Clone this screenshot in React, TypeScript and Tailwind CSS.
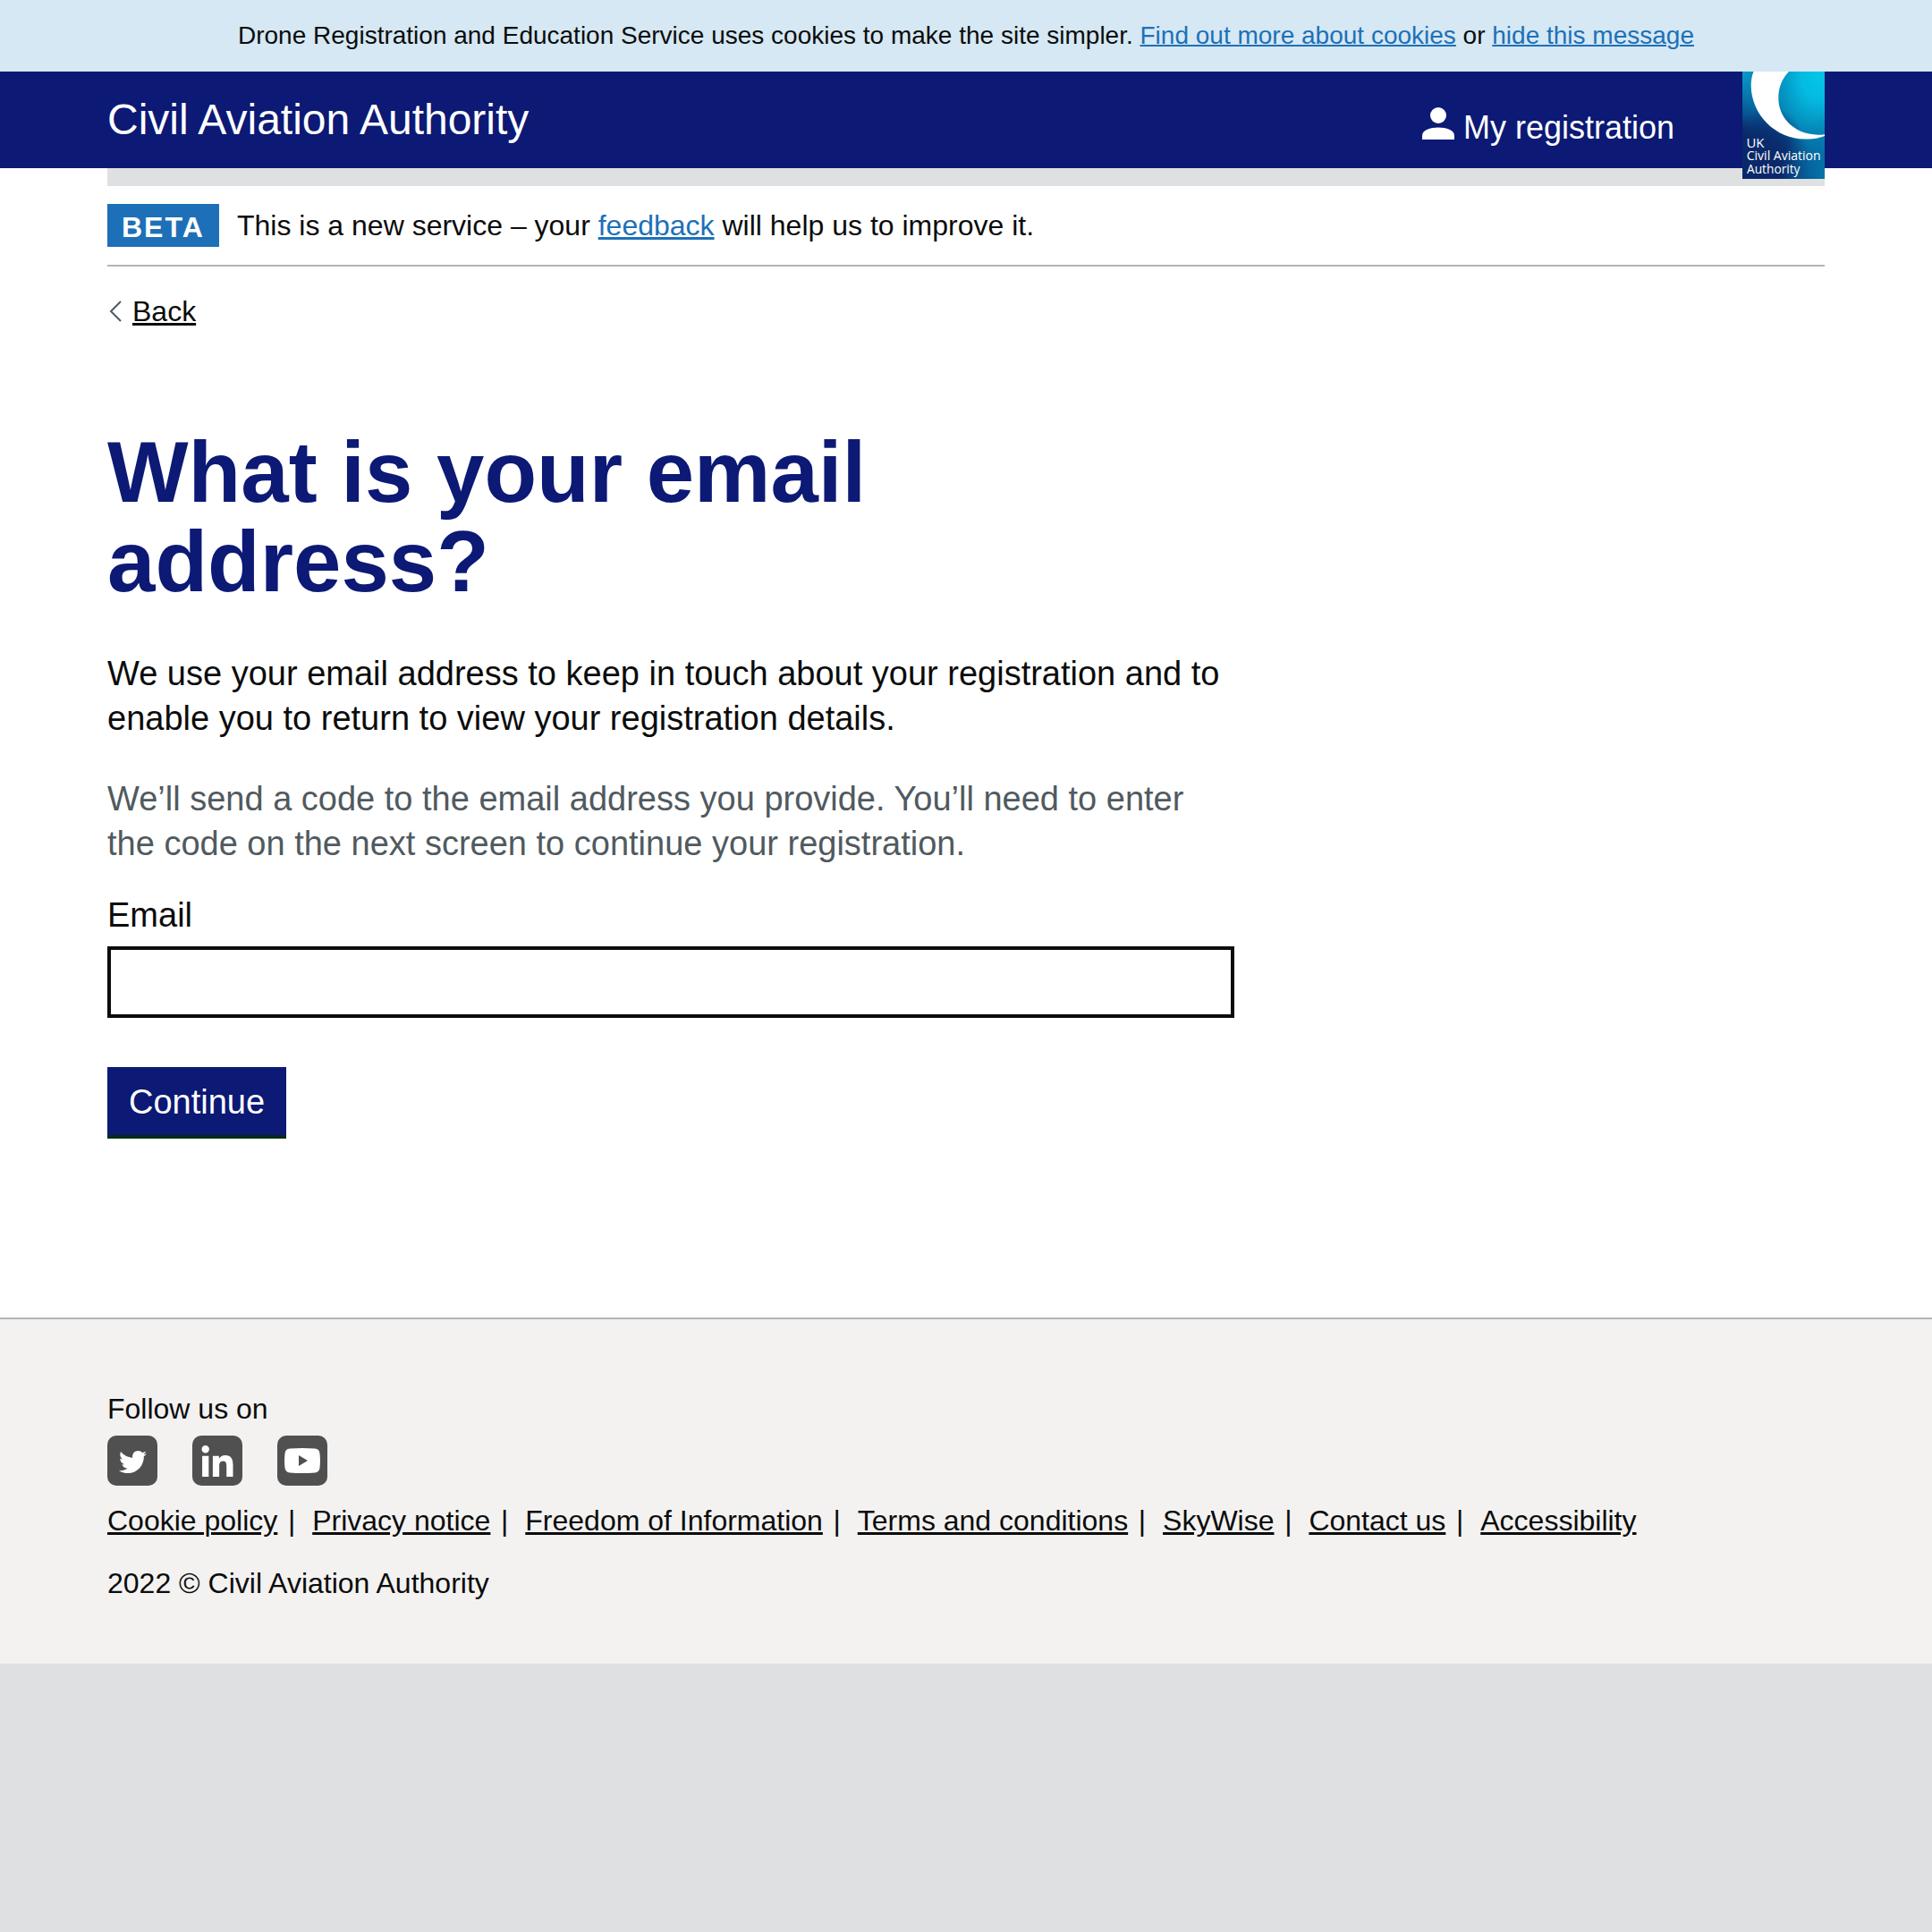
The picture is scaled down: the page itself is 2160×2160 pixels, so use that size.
import React from "react";
import { FaTwitter, FaLinkedinIn } from "react-icons/fa";

const footerLinks = [
  "Cookie policy",
  "Privacy notice",
  "Freedom of Information",
  "Terms and conditions",
  "SkyWise",
  "Contact us",
  "Accessibility",
];

function CaaLogo() {
  return (
    <svg className="block h-[120px] w-[92px]" viewBox="0 0 92 120">
      <defs>
        <radialGradient id="sea" cx="0.92" cy="0.05" r="1.05">
          <stop offset="0" stopColor="#04c4e8" />
          <stop offset="0.2" stopColor="#04bae0" />
          <stop offset="0.5" stopColor="#0587b8" />
          <stop offset="0.8" stopColor="#08478a" />
          <stop offset="1" stopColor="#0a2869" />
        </radialGradient>
        <radialGradient id="left" cx="0" cy="0" r="0.55">
          <stop offset="0" stopColor="#069fcb" />
          <stop offset="1" stopColor="#069fcb" stopOpacity="0" />
        </radialGradient>
        <radialGradient id="dark" cx="0.32" cy="0.82" r="0.5">
          <stop offset="0" stopColor="#0a2869" />
          <stop offset="0.5" stopColor="#0a2869" stopOpacity="0.8" />
          <stop offset="1" stopColor="#0a2869" stopOpacity="0" />
        </radialGradient>
        <radialGradient id="right" cx="1.05" cy="1" r="0.6">
          <stop offset="0" stopColor="#057bad" />
          <stop offset="1" stopColor="#057bad" stopOpacity="0" />
        </radialGradient>
      </defs>
      <rect width="92" height="120" fill="url(#sea)" />
      <rect width="92" height="120" fill="url(#left)" />
      <rect width="92" height="120" fill="url(#dark)" />
      <rect width="92" height="120" fill="url(#right)" />
      <path
        d="M12.5 0C10.5 5 9.7 10 9.7 16C10 48 37 75.500 70 75.500C78 75.500 86 74.500 92 72V70.300C88 71 85 71 82 70.600C58 69 40.300 52 40.300 29.500C40.300 18 44.500 7.500 52 0Z"
        fill="#fff"
      />
      <g fill="#fff" fontFamily="'Open Sans', 'Noto Sans', sans-serif" fontSize="14">
        <text x="4.500" y="85" textLength="20" lengthAdjust="spacingAndGlyphs">UK</text>
        <text x="4.700" y="99.300" textLength="83" lengthAdjust="spacingAndGlyphs">Civil Aviation</text>
        <text x="5" y="113.700" textLength="59.500" lengthAdjust="spacingAndGlyphs">Authority</text>
      </g>
    </svg>
  );
}

export default function App() {
  return (
    <div className="min-h-[2160px] bg-[#dee0e2] font-['Liberation_Sans',Arial,sans-serif] text-[32px] leading-[40px] text-[#0b0c0c]">
      <div className="h-[80px] bg-[#d5e8f3] text-center text-[28px] leading-[79px]">
        Drone Registration and Education Service uses cookies to make the site simpler.{" "}
        <a className="text-[#1d70b8] underline decoration-2">Find out more about cookies</a> or{" "}
        <a className="text-[#1d70b8] underline decoration-2">hide this message</a>
      </div>
      <header className="h-[108px] bg-[#0c1975] px-[120px] text-white">
        <div className="flex items-start">
          <span className="mt-[24px] text-[48px] leading-[60px]">Civil Aviation Authority</span>
          <a className="mt-[38px] ml-auto flex text-[36px] leading-[50px]">
            <svg className="mt-[2px] mr-[10px] size-[36px]" viewBox="0 0 36 36" fill="#fff">
              <circle cx="18" cy="9" r="9" />
              <path d="M0 36V31.500C0 25.500 9 22.500 18 22.500S36 25.500 36 31.500V36Z" />
            </svg>
            My registration
          </a>
          <div className="relative z-10 ml-[76px]">
            <CaaLogo />
          </div>
        </div>
      </header>
      <div className="bg-white px-[120px] pb-[200px]">
        <div className="h-[20px] bg-[#dee0e2]" />
        <div className="flex h-[90px] items-start border-b-2 border-[#b1b4b6] pt-[20px]">
          <strong className="h-[48px] w-[125px] bg-[#1d70b8] pl-[16px] leading-[53px] tracking-[2px] text-white">BETA</strong>
          <span className="ml-[20px] leading-[48px]">
            This is a new service – your <a className="text-[#1d70b8] underline decoration-[3px]">feedback</a> will help us to improve it.
          </span>
        </div>
        <div className="mt-[30px] flex items-center">
          <svg className="mr-[12px] ml-[2px] h-[24px] w-[14px]" viewBox="0 0 14 24" fill="none" stroke="#505a5f" strokeWidth="2">
            <path d="M13 1L2 12L13 23" />
          </svg>
          <a className="underline decoration-[3px]">Back</a>
        </div>
        <main className="mt-[110px] w-[1260px] text-[38px] leading-[50px]">
          <h1 className="w-[1000px] text-[96px] leading-[100px] font-bold text-[#0c1975]">What is your email address?</h1>
          <p className="mt-[50px]">
            We use your email address to keep in touch about your registration and to enable you to return to view your registration details.
          </p>
          <p className="mt-[40px] text-[#505a5f]">
            We’ll send a code to the email address you provide. You’ll need to enter the code on the next screen to continue your registration.
          </p>
          <label className="mt-[30px] block">Email</label>
          <input className="mt-[10px] block h-[80px] w-full border-4 border-[#0b0c0c] bg-white" />
          <button className="mt-[55px] block h-[80px] w-[200px] border-b-4 border-[#002d18] bg-[#0c1975] pt-[2px] text-white">Continue</button>
        </main>
      </div>
      <footer className="h-[387px] border-t-2 border-[#b1b4b6] bg-[#f3f2f1] px-[120px] pt-[80px]">
        <div>Follow us on</div>
        <div className="mt-[10px] flex gap-[39px]">
          <a className="flex size-[56px] items-center justify-center rounded-[10px] bg-[#505050] text-white">
            <FaTwitter size={31} className="mt-[2px]" />
          </a>
          <a className="flex size-[56px] items-center justify-center rounded-[10px] bg-[#505050] text-white">
            <FaLinkedinIn size={40} className="mt-[5px]" />
          </a>
          <a className="flex size-[56px] items-center justify-center rounded-[10px] bg-[#505050]">
            <svg className="h-[28px] w-[40px]" viewBox="0 0 40 28">
              <path d="M6 .6Q20-.6 34 .6Q39 1 39.500 6Q40.400 14 39.500 22Q39 27 34 27.400Q20 28.600 6 27.400Q1 27 .5 22Q-.4 14 .5 6Q1 1 6 .6Z" fill="#fff" />
              <path d="M16 8V20L26 14Z" fill="#505050" />
            </svg>
          </a>
        </div>
        <div className="mt-[19px] flex">
          {footerLinks.map((label, i) => (
            <span key={label} className="mr-[18.9px] whitespace-pre">
              <a className="underline decoration-[3px]">{label}</a>
              {i < footerLinks.length - 1 && <span className="ml-[11.7px]">|</span>}
            </span>
          ))}
        </div>
        <div className="mt-[30px]">2022 © Civil Aviation Authority</div>
      </footer>
    </div>
  );
}
